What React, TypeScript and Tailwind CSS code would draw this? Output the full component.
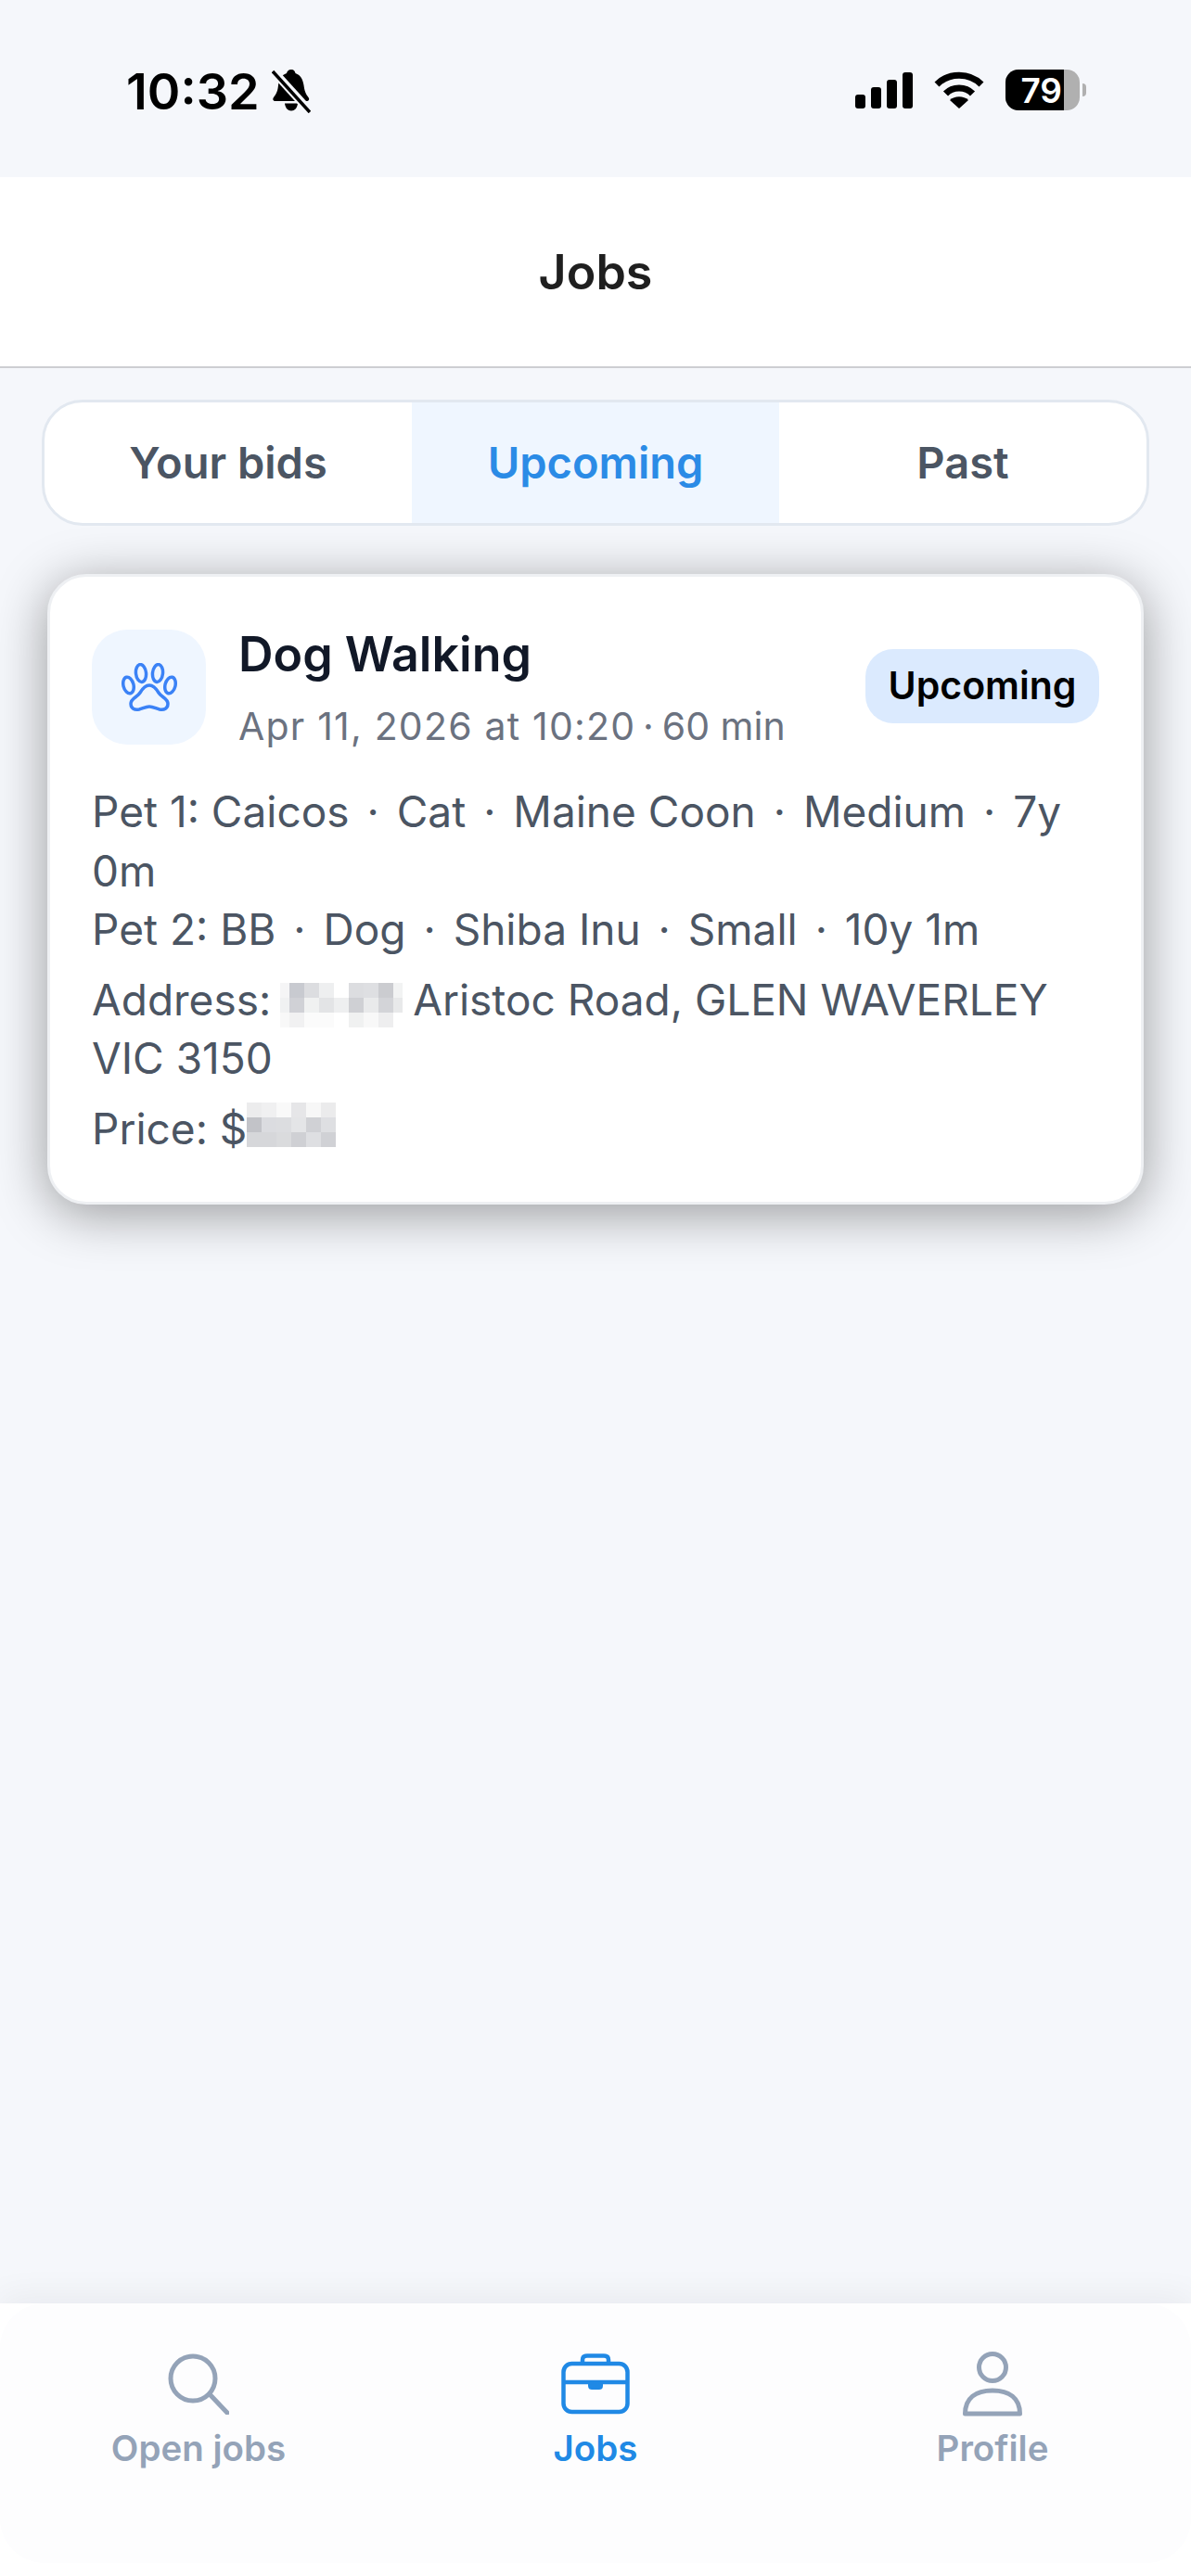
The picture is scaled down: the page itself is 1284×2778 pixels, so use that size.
const addressBlur = [
  "bg-[#f5f5f6]", "bg-[#c8cad0]", "bg-[#dcdde0]", "bg-[#eeeff0]", "bg-white", "bg-[#dcdde0]", "bg-[#dedfe2]", "bg-[#cbccd0]", "bg-[#f2f3f3]",
  "bg-[#f0f1f2]", "bg-[#d0d1d6]", "bg-[#f0f1f1]", "bg-[#e3e4e6]", "bg-[#eeeff0]", "bg-[#cfd0d4]", "bg-[#e9eaeb]", "bg-[#d3d4d8]", "bg-[#e8e9ea]",
  "bg-[#f8f8f8]", "bg-[#f1f1f2]", "bg-[#fbfbfb]", "bg-[#fbfbfb]", "bg-white", "bg-[#f0f1f1]", "bg-[#f8f8f8]", "bg-[#eeeeef]", "bg-white",
];

const priceBlur = [
  "bg-[#ececed]", "bg-[#f0f0f1]", "bg-[#f9f9f9]", "bg-[#e6e6e8]", "bg-[#f7f7f7]", "bg-[#ebebec]",
  "bg-[#c2c3c8]", "bg-[#dbdce0]", "bg-[#dcdde0]", "bg-[#e4e5e7]", "bg-[#d0d1d5]", "bg-[#dedfe2]",
  "bg-[#d6d7da]", "bg-[#d6d7da]", "bg-[#dadbdd]", "bg-[#cfd0d4]", "bg-[#dedfe2]", "bg-[#d0d1d5]",
];

function BellOff() {
  return (
    <svg width="42" height="47" viewBox="0 0 42 47" className="ml-[13px] mt-[2px]">
      <path
        d="M21 0c3 0 4 2 4.500 4 6 2 8 7 9 13 .8 6 2 9 5 13 1.500 2 .5 4-2 4H4c-2.500 0-3.500-2-2-4 3-4 4.500-7 5-13 .8-6 3-11 9-13C16.500 2 18 0 21 0z"
        fill="#000"
      />
      <path d="M14 36.500h14c-.5 5-3.500 8-7 8s-6.500-3-7-8z" fill="#000" />
      <path d="M1 1l40 44" stroke="#f5f7fb" strokeWidth="9" />
      <path d="M1 2l40 44" stroke="#000" strokeWidth="3.500" />
    </svg>
  );
}

function Signal() {
  return (
    <div className="flex items-end gap-[6px] h-[40px]">
      <div className="w-[11px] h-[15px] rounded-[3px] bg-black" />
      <div className="w-[11px] h-[23px] rounded-[3px] bg-black" />
      <div className="w-[11px] h-[31px] rounded-[3px] bg-black" />
      <div className="w-[11px] h-[39px] rounded-[3px] bg-black" />
    </div>
  );
}

function Wifi() {
  return (
    <svg width="54" height="40" viewBox="0 0 54 40">
      <path d="M3 14C16 1 38 1 51 14" fill="none" stroke="#000" strokeWidth="7" />
      <path d="M12.500 24C20 16 34 16 41.500 24" fill="none" stroke="#000" strokeWidth="7" />
      <path d="M27 40L17 31C22 26 32 26 37 31z" fill="#000" />
    </svg>
  );
}

function Battery() {
  return (
    <div className="flex items-center">
      <div className="w-[80px] h-[44px] rounded-[14px] overflow-hidden bg-[#b0b0b0]">
        <div className="w-[63px] h-full bg-black flex items-center justify-end pr-[2px]">
          <span className="text-white text-[37px] leading-none font-semibold">79</span>
        </div>
      </div>
      <div className="w-[4px] h-[14px] ml-[3px] rounded-r-full bg-[#b0b0b0]" />
    </div>
  );
}

function PawIcon() {
  return (
    <svg width="60" height="53" viewBox="0 0 60 53" fill="none" stroke="#3b82f6" strokeWidth="3.500">
      <ellipse cx="7.500" cy="24" rx="5.500" ry="9" transform="rotate(-14 7.500 24)" />
      <ellipse cx="21" cy="11" rx="5.500" ry="9.500" transform="rotate(-6 21 11)" />
      <ellipse cx="39" cy="11" rx="5.500" ry="9.500" transform="rotate(6 39 11)" />
      <ellipse cx="52.500" cy="24" rx="5.500" ry="9" transform="rotate(14 52.500 24)" />
      <path d="M30 24C26 24 23 27 20 32C17 37 10 38 10 44C10 49 14 51 19 50C23 49 26 47 30 47C34 47 37 49 41 50C46 51 50 49 50 44C50 38 43 37 40 32C37 27 34 24 30 24Z" />
    </svg>
  );
}

function SearchIcon() {
  return (
    <svg width="66" height="66" viewBox="0 0 66 66" fill="none" stroke="#94a3b8" strokeWidth="5">
      <circle cx="27" cy="27" r="24" />
      <path d="M45 44L64 64" strokeLinecap="round" />
    </svg>
  );
}

function BagIcon() {
  return (
    <svg width="74" height="66" viewBox="0 0 74 66" fill="none" stroke="#2089e5" strokeWidth="4.500">
      <path d="M23 11V7C23 4 25 2.500 28 2.500H46C49 2.500 51 4 51 7V11" />
      <rect x="2.500" y="11" width="69" height="52" rx="9" />
      <path d="M2.500 31H71.500" />
      <path d="M29 31H45V35C45 38 43 39 41 39H33C31 39 29 38 29 35Z" fill="#2089e5" stroke="none" />
    </svg>
  );
}

function PersonIcon() {
  return (
    <svg width="66" height="70" viewBox="0 0 66 70" fill="none" stroke="#94a3b8" strokeWidth="5">
      <circle cx="33" cy="17" r="14.500" />
      <path d="M3.500 67C3.500 50 15 42 33 42C51 42 62.500 50 62.500 67Z" strokeLinejoin="round" />
    </svg>
  );
}

function NavItem({ icon, label, active }: { icon: React.ReactNode; label: string; active?: boolean }) {
  return (
    <div className="flex flex-col items-center">
      <div className="h-[70px] flex items-center justify-center">{icon}</div>
      <span className={`mt-[10px] text-[38.500px] leading-[48px] font-semibold ${active ? "text-[#2089e5]" : "text-[#94a3b8]"}`}>
        {label}
      </span>
    </div>
  );
}

function Dot() {
  return <span className="mx-[6px]"> · </span>;
}

export default function App() {
  return (
    <div className="h-[2778px] flex flex-col bg-[#f5f7fb] [font-family:Inter,sans-serif] overflow-hidden">
      {/* Status bar */}
      <div className="h-[191px] flex justify-between items-start pt-[73px] pl-[136px] pr-[113px]">
        <div className="flex items-start">
          <span className="text-[54px] leading-[52px] font-semibold text-black">10:32</span>
          <BellOff />
        </div>
        <div className="flex items-center gap-[23px] pt-[2px]">
          <Signal />
          <Wifi />
          <Battery />
        </div>
      </div>

      {/* Header */}
      <header className="h-[206px] bg-white border-b-[2px] border-[#cdced2] flex items-center justify-center">
        <h1 className="text-[52px] font-semibold text-[#1f1f1f] mt-[2px]">Jobs</h1>
      </header>

      <main className="flex-1 min-h-0">
        {/* Tabs */}
        <div className="mx-[45px] mt-[34px] h-[136px] grid grid-cols-3 rounded-[44px] border-[3px] border-[#e2e8f0] bg-white overflow-hidden text-[47px] font-semibold">
          <div className="flex items-center justify-center text-[#4b5563]">Your bids</div>
          <div className="flex items-center justify-center bg-[#eff6ff] text-[#2b8be6]">Upcoming</div>
          <div className="flex items-center justify-center text-[#4b5563]">Past</div>
        </div>

        {/* Job card */}
        <div className="mx-[51px] mt-[52px] h-[680px] rounded-[42px] border-[3px] border-[#eef0f3] bg-white px-[45px] pt-[57px] shadow-[0_10px_56px_rgba(0,0,0,0.38)]">
          <div className="flex items-start h-[124px]">
            <div className="w-[123px] h-[124px] shrink-0 rounded-[38px] bg-[#eff6ff] flex items-center justify-center">
              <PawIcon />
            </div>
            <div className="ml-[35px] flex-1 min-w-0 -mt-[4px]">
              <div className="text-[52px] leading-[62px] font-semibold text-[#111827]">Dog Walking</div>
              <div className="mt-[20px] text-[41px] leading-[52px] tracking-[1.2px] text-[#6b7280]">
                Apr 11, 2026 at 10:20<span className="-mx-[5px]"> · </span><span className="tracking-normal">60 min</span>
              </div>
            </div>
            <div className="mt-[21px] w-[252px] h-[80px] shrink-0 rounded-[30px] bg-[#dbeafe] flex items-center justify-center text-[41px] font-semibold text-black">
              Upcoming
            </div>
          </div>

          <div className="mt-[41px] flex flex-col gap-[12px] text-[46px] leading-[63.500px] text-[#4b5563]">
            <div>
              <div>Pet 1: Caicos<Dot />Cat<Dot />Maine Coon<Dot />Medium<Dot />7y 0m</div>
              <div>Pet 2: BB<Dot />Dog<Dot />Shiba Inu<Dot />Small<Dot />10y 1m</div>
            </div>
            <div>
              Address:{" "}
              <span className="inline-block overflow-hidden align-[-3px] -my-[10px] -ml-[3px] -mr-[2px]">
                <span className="grid grid-cols-[10px_repeat(7,16px)_10px] grid-rows-[repeat(3,16px)]">
                  {addressBlur.map((c, i) => (
                    <span key={i} className={c} />
                  ))}
                </span>
              </span>{" "}
              Aristoc Road, GLEN WAVERLEY VIC 3150
            </div>
            <div>
              Price: $
              <span className="inline-block overflow-hidden align-[7px] -my-[10px]">
                <span className="grid grid-cols-[repeat(6,16px)] grid-rows-[repeat(3,16px)]">
                  {priceBlur.map((c, i) => (
                    <span key={i} className={c} />
                  ))}
                </span>
              </span>
            </div>
          </div>
        </div>
      </main>

      {/* Bottom nav */}
      <nav className="h-[294px] bg-white shadow-[0_-6px_36px_rgba(15,23,42,0.06)]">
        <div className="h-[280px] rounded-[48px] bg-[#fdfdfe] grid grid-cols-3 pt-[52px]">
          <NavItem icon={<SearchIcon />} label="Open jobs" />
          <NavItem icon={<BagIcon />} label="Jobs" active />
          <NavItem icon={<PersonIcon />} label="Profile" />
        </div>
      </nav>
    </div>
  );
}
